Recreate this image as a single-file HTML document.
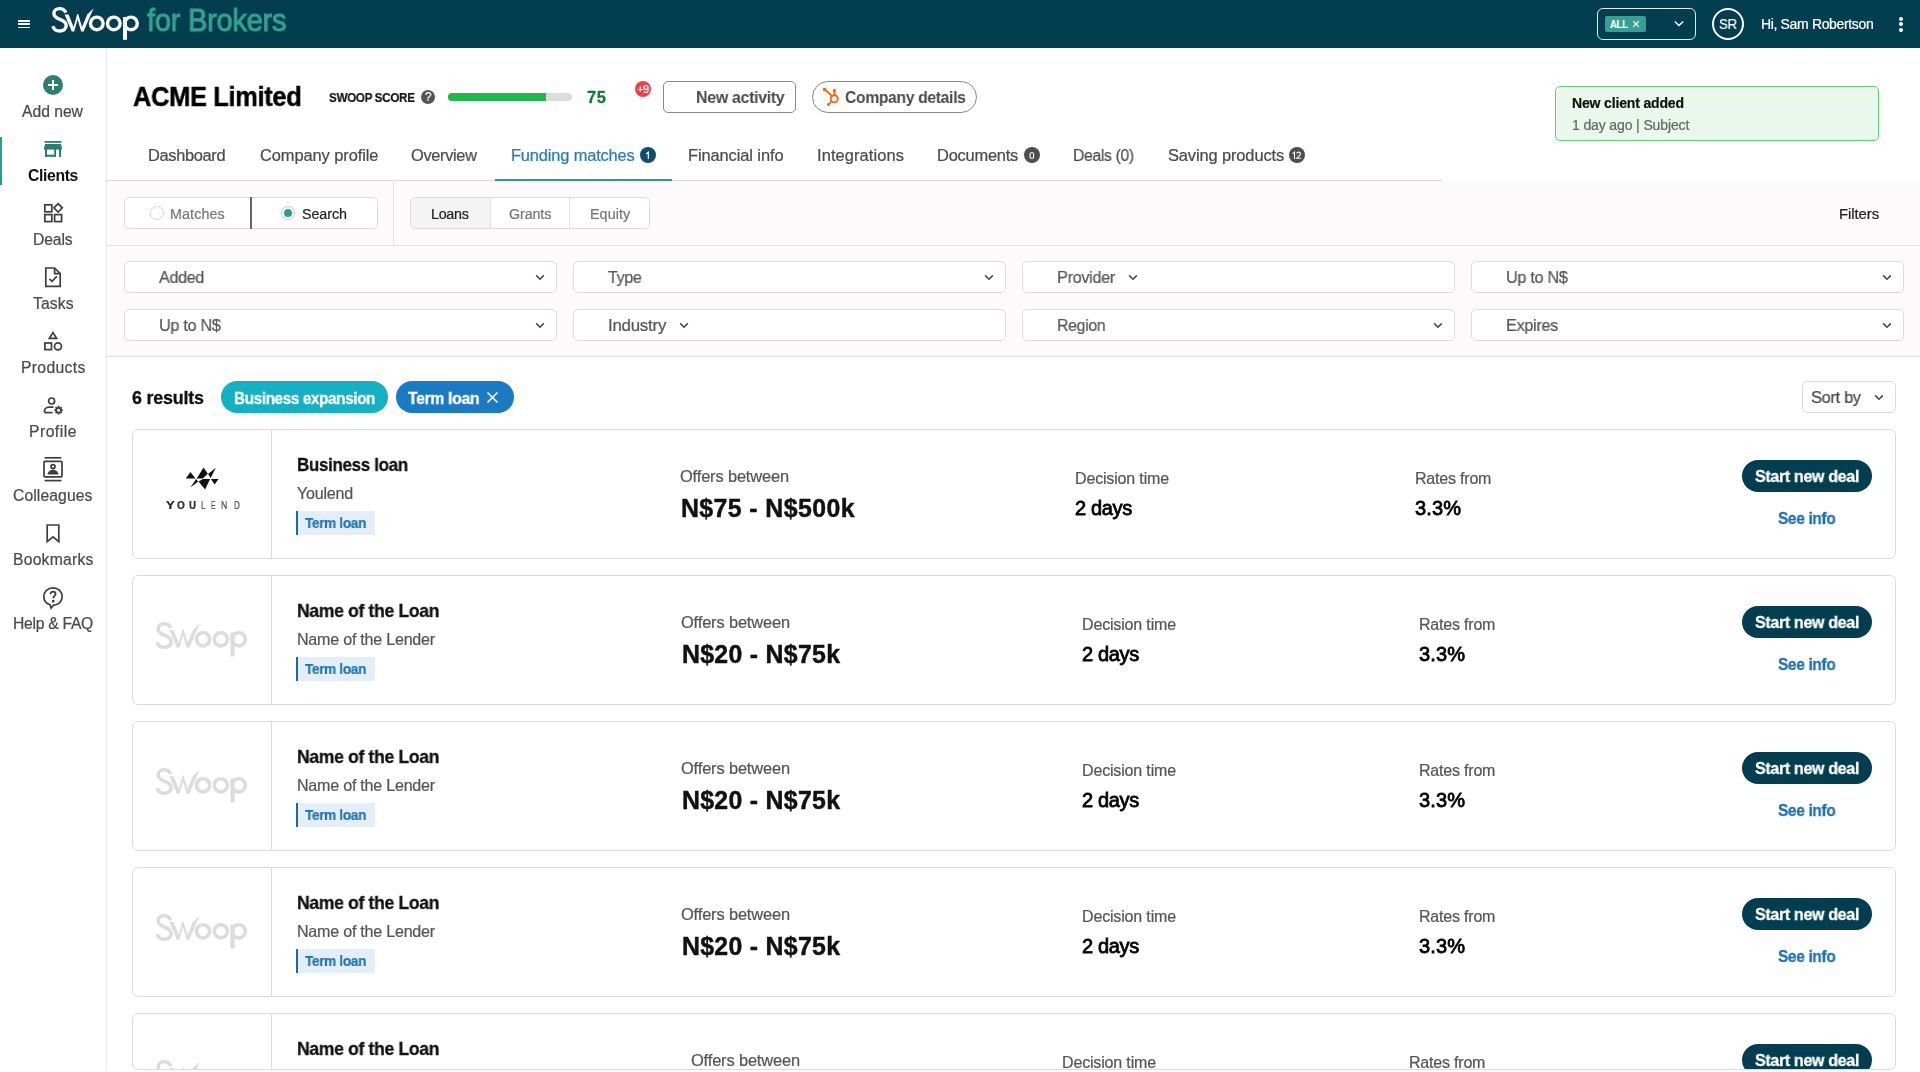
<!DOCTYPE html>
<html><head><meta charset="utf-8"><title>Swoop for Brokers</title>
<style>
html,body{margin:0;padding:0;width:1920px;height:1072px;overflow:hidden;background:#fff;position:relative}
body{font-family:"Liberation Sans",sans-serif}
.b{position:absolute}
.t{position:absolute;line-height:0;white-space:nowrap;will-change:transform}
svg.b{overflow:visible}
</style></head><body>
<div class="b" style="left:0px;top:0px;width:1920px;height:48px;background:#033e50"></div>
<div class="b" style="left:18px;top:20px;width:12px;height:1.6px;background:#fff"></div>
<div class="b" style="left:18px;top:23.3px;width:12px;height:1.6px;background:#fff"></div>
<div class="b" style="left:18px;top:26.7px;width:12px;height:1.6px;background:#fff"></div>
<svg class="b" style="left:48px;top:4px" width="96" height="40" viewBox="48 4 96 40">
<g fill="none" stroke="#fff" stroke-width="3.4">
<path d="M65.8 12.6 C64.6 9.8 62.3 8.6 59.6 8.6 C56 8.6 53.9 10.8 53.9 13.6 C53.9 16.9 56.8 18.3 59.9 19.4 C63.6 20.7 66.2 22.3 66.2 25.6 C66.2 29 63.4 31 59.6 31 C56.2 31 53.8 29.2 52.8 26.2"/>
<circle cx="96.8" cy="23.4" r="6.3"/>
<circle cx="113.8" cy="23.4" r="6.3"/>
<circle cx="131" cy="23.4" r="6.3"/>
</g>
<path d="M123 17 h4 v22.8 h-4z" fill="#fff"/>
<path d="M64.6 14.4 L68.6 14.4 L73.6 27 L77.2 14 L78.2 14 L82 27 L87.2 14.4 L93.8 8.2 L90.4 15.6 L83.6 31.6 L81.2 31.6 L77.6 19.6 L74.2 31.6 L71.8 31.6 Z" fill="#fff"/>
</svg>
<span class="t" style="left:146.50px;top:20.06px;font-size:31.71px;font-weight:400;color:#35a190;letter-spacing:-0.350px;transform:scaleX(0.9203);transform-origin:0 0;-webkit-text-stroke:0.22px #35a190;-webkit-text-stroke:0.9px #35a190;">for Brokers</span>
<div class="b" style="left:1597px;top:8px;width:99px;height:32px;border:1px solid #e6eef0;border-radius:6px;box-sizing:border-box"></div>
<div class="b" style="left:1605px;top:16px;width:41px;height:16px;background:#35a190;border-radius:2px"></div>
<span class="t" style="left:1609.70px;top:24.35px;font-size:10.57px;font-weight:700;color:#fff;letter-spacing:-0.350px;transform:scaleX(0.9068);transform-origin:0 0;-webkit-text-stroke:0.20px #fff;">ALL</span>
<svg class="b" style="left:1632px;top:20px" width="8" height="8" viewBox="0 0 8 8"><path d="M1 1L7 7M7 1L1 7" stroke="#fff" stroke-width="1.1"/></svg>
<svg class="b" style="left:1674px;top:20px" width="10" height="8" viewBox="0 0 10 8"><path d="M0.8 1.4L5 5.6L9.2 1.4" fill="none" stroke="#fff" stroke-width="1.4"/></svg>
<div class="b" style="left:1712px;top:8px;width:32px;height:32px;border:2px solid #fff;border-radius:50%;box-sizing:border-box"></div>
<span class="t" style="left:1719.00px;top:24.07px;font-size:14.29px;font-weight:400;color:#fff;letter-spacing:-0.350px;transform:scaleX(0.9234);transform-origin:0 0;-webkit-text-stroke:0.22px #fff;">SR</span>
<span class="t" style="left:1760.60px;top:24.37px;font-size:14.00px;font-weight:400;color:#fff;letter-spacing:-0.350px;transform:scaleX(0.9976);transform-origin:0 0;-webkit-text-stroke:0.22px #fff;">Hi, Sam Robertson</span>
<div class="b" style="left:1899px;top:16.6px;width:4px;height:4px;border-radius:50%;background:#fff"></div>
<div class="b" style="left:1899px;top:22.2px;width:4px;height:4px;border-radius:50%;background:#fff"></div>
<div class="b" style="left:1899px;top:27.8px;width:4px;height:4px;border-radius:50%;background:#fff"></div>
<div class="b" style="left:106px;top:48px;width:1px;height:1022px;background:#e8e8e8"></div>
<div class="b" style="left:0px;top:137px;width:2px;height:48px;background:#2a9d8f"></div>
<div class="b" style="left:43px;top:75px;width:20px;height:20px;border-radius:50%;background:#2b7e70"></div>
<div class="b" style="left:48px;top:84px;width:10px;height:2.2px;background:#fff"></div><div class="b" style="left:51.9px;top:80px;width:2.2px;height:10px;background:#fff"></div>
<svg class="b" style="left:43px;top:140px" width="20" height="18" viewBox="0 0 20 18">
<rect x="1.5" y="1" width="17" height="1.8" fill="#2b7e70"/>
<path d="M2 4 H18 L19 8.4 H1 Z" fill="#2b7e70"/>
<path d="M1 8 H19 V9.6 H1Z" fill="#2b7e70"/>
<rect x="2" y="9" width="2" height="8" fill="#2b7e70"/><rect x="16" y="9" width="2" height="8" fill="#2b7e70"/>
<rect x="2" y="14.7" width="11" height="2.1" fill="#2b7e70"/><rect x="11.2" y="9" width="1.9" height="7.8" fill="#2b7e70"/>
</svg>
<span class="t" style="left:22.00px;top:112.08px;font-size:15.71px;font-weight:400;color:#4a4a4a;letter-spacing:-0.032px;-webkit-text-stroke:0.22px #4a4a4a;">Add new</span>
<span class="t" style="left:27.70px;top:175.58px;font-size:15.71px;font-weight:700;color:#111;letter-spacing:-0.349px;-webkit-text-stroke:0.30px #111;-webkit-text-stroke:0;">Clients</span>
<span class="t" style="left:33.20px;top:239.88px;font-size:15.71px;font-weight:400;color:#4a4a4a;letter-spacing:-0.120px;-webkit-text-stroke:0.22px #4a4a4a;">Deals</span>
<span class="t" style="left:32.60px;top:303.78px;font-size:15.71px;font-weight:400;color:#4a4a4a;letter-spacing:0.134px;-webkit-text-stroke:0.22px #4a4a4a;">Tasks</span>
<span class="t" style="left:20.80px;top:367.88px;font-size:15.71px;font-weight:400;color:#4a4a4a;letter-spacing:0.327px;-webkit-text-stroke:0.22px #4a4a4a;">Products</span>
<span class="t" style="left:29.00px;top:431.88px;font-size:15.71px;font-weight:400;color:#4a4a4a;letter-spacing:0.475px;-webkit-text-stroke:0.22px #4a4a4a;">Profile</span>
<span class="t" style="left:13.30px;top:495.68px;font-size:15.71px;font-weight:400;color:#4a4a4a;letter-spacing:0.098px;-webkit-text-stroke:0.22px #4a4a4a;">Colleagues</span>
<span class="t" style="left:12.80px;top:559.68px;font-size:15.71px;font-weight:400;color:#4a4a4a;letter-spacing:0.225px;-webkit-text-stroke:0.22px #4a4a4a;">Bookmarks</span>
<span class="t" style="left:12.80px;top:623.88px;font-size:15.71px;font-weight:400;color:#4a4a4a;letter-spacing:-0.286px;-webkit-text-stroke:0.22px #4a4a4a;">Help &amp; FAQ</span>
<svg class="b" style="left:40px;top:200px" width="26" height="26" viewBox="0 0 26 26" fill="none" stroke="#3d3d3d" stroke-width="1.7">
<rect x="4.8" y="4.8" width="7" height="7"/><path d="M18.1 3.6 L22.3 7.8 L18.1 12 L13.9 7.8Z"/>
<rect x="4.8" y="14.6" width="7" height="7"/><rect x="14.6" y="14.6" width="7" height="7"/></svg>
<svg class="b" style="left:40px;top:264px" width="26" height="26" viewBox="0 0 26 26" fill="none" stroke="#3d3d3d" stroke-width="1.7">
<path d="M5.8 4 H14.6 L20.2 9.6 V22.4 H5.8Z"/><path d="M14.6 4 V9.6 H20.2" /><path d="M9.4 14.8 L12 17.4 L16.8 12.4"/></svg>
<svg class="b" style="left:40px;top:328px" width="26" height="26" viewBox="0 0 26 26" fill="none" stroke="#3d3d3d" stroke-width="1.7">
<path d="M13 4.6 L16.6 10.4 H9.4Z"/><rect x="4.9" y="15" width="6.6" height="6.6"/><circle cx="18" cy="18.3" r="3.5"/></svg>
<svg class="b" style="left:40px;top:392px" width="26" height="26" viewBox="0 0 26 26" fill="none" stroke="#3d3d3d" stroke-width="1.7">
<circle cx="11.6" cy="9" r="3"/><path d="M4.5 20.6 V19 C4.5 16.6 7 15 10.5 15 L13.5 15.2"/><path d="M4.5 20.6 H12.6"/>
<circle cx="18.6" cy="18.2" r="2.4"/><path d="M18.6 13.8v1.6M18.6 21v1.6M14.4 18.2h1.6M21.2 18.2h1.6M15.6 15.2l1.1 1.1M20.5 20.1l1.1 1.1M15.6 21.2l1.1-1.1M20.5 16.3l1.1-1.1"/></svg>
<svg class="b" style="left:40px;top:456px" width="26" height="26" viewBox="0 0 26 26" fill="none" stroke="#3d3d3d" stroke-width="1.7">
<path d="M4.6 1.8 H21.4"/><path d="M4.6 24.6 H21.4"/><rect x="4" y="5.4" width="18" height="15.4" rx="1"/>
<circle cx="13" cy="10.6" r="2"/><path d="M8.6 17.6 C9.4 15.4 11 14.6 13 14.6 C15 14.6 16.6 15.4 17.4 17.6Z" fill="#3d3d3d"/></svg>
<svg class="b" style="left:40px;top:520px" width="26" height="26" viewBox="0 0 26 26" fill="none" stroke="#3d3d3d" stroke-width="1.7">
<path d="M7.2 5 H18.8 V21.6 L13 16.8 L7.2 21.6Z"/></svg>
<svg class="b" style="left:40px;top:584px" width="26" height="26" viewBox="0 0 26 26" fill="none" stroke="#3d3d3d" stroke-width="1.7">
<path d="M13.6 21.2 C18.6 21 22.2 17.4 22.2 12.6 C22.2 7.6 18.2 3.8 13 3.8 C7.9 3.8 3.8 7.7 3.8 12.6 C3.8 16.6 6.3 19.7 10 20.8 L11 24 Z"/>
<path d="M10.4 10.2 C10.4 8.6 11.6 7.6 13 7.6 C14.5 7.6 15.6 8.6 15.6 10 C15.6 11.8 13.2 12 13.2 14.2"/><circle cx="13.2" cy="17.2" r="0.6" fill="#3d3d3d"/></svg>
<span class="t" style="left:133.00px;top:97.44px;font-size:27.43px;font-weight:700;color:#000;letter-spacing:-0.350px;transform:scaleX(0.9272);transform-origin:0 0;-webkit-text-stroke:0.45px #000;">ACME Limited</span>
<span class="t" style="left:328.70px;top:97.67px;font-size:13.14px;font-weight:700;color:#111;letter-spacing:-0.350px;transform:scaleX(0.8863);transform-origin:0 0;-webkit-text-stroke:0.20px #111;">SWOOP SCORE</span>
<div class="b" style="left:421px;top:90px;width:14px;height:14px;border-radius:50%;background:#555"></div>
<span class="t" style="left:424.80px;top:97.06px;font-size:12.29px;font-weight:400;color:#fff;letter-spacing:0.000px;transform:scaleX(0.9369);transform-origin:0 0;-webkit-text-stroke:0.22px #fff;">?</span>
<div class="b" style="left:448px;top:93px;width:124px;height:8px;background:#dddddd;border-radius:4px"></div>
<div class="b" style="left:448px;top:93px;width:98px;height:8px;background:#1fb84a;border-radius:4px 0 0 4px"></div>
<span class="t" style="left:587.20px;top:97.33px;font-size:16.43px;font-weight:700;color:#0f7a30;letter-spacing:0.531px;-webkit-text-stroke:0.30px #0f7a30;">75</span>
<div class="b" style="left:635px;top:81px;width:16px;height:16px;border-radius:50%;background:#e8434b"></div>
<span class="t" style="left:637.20px;top:89.26px;font-size:11.43px;font-weight:400;color:#fff;letter-spacing:-0.350px;transform:scaleX(0.9623);transform-origin:0 0;-webkit-text-stroke:0.22px #fff;">+9</span>
<div class="b" style="left:663px;top:81px;width:133px;height:32px;border:1px solid #8a8a8a;border-radius:5px;box-sizing:border-box"></div>
<span class="t" style="left:696.00px;top:97.29px;font-size:17.14px;font-weight:700;color:#4a4a4a;letter-spacing:-0.350px;transform:scaleX(0.9324);transform-origin:0 0;-webkit-text-stroke:0.30px #4a4a4a;-webkit-text-stroke:0;">New activity</span>
<div class="b" style="left:812px;top:81px;width:165px;height:32px;border:1px solid #8a8a8a;border-radius:16px;box-sizing:border-box"></div>
<svg class="b" style="left:821px;top:86px" width="20" height="22" viewBox="0 0 20 22">
<g stroke="#f4680f" stroke-width="1.9" fill="none"><circle cx="13.3" cy="12.8" r="3.55"/><path d="M3.7 3.6 L10.6 9.4"/><path d="M13.3 4.4 V9.3"/><path d="M7.4 18.4 L10.9 15.1"/></g>
<circle cx="3.65" cy="3.55" r="1.9" fill="#f4680f"/><circle cx="13.3" cy="4.4" r="1.6" fill="#f4680f"/><circle cx="7.4" cy="18.4" r="1.5" fill="#f4680f"/></svg>
<span class="t" style="left:845.00px;top:97.29px;font-size:17.14px;font-weight:700;color:#4a4a4a;letter-spacing:-0.350px;transform:scaleX(0.9147);transform-origin:0 0;-webkit-text-stroke:0.30px #4a4a4a;-webkit-text-stroke:0;">Company details</span>
<div class="b" style="left:1555px;top:86px;width:324px;height:55px;background:#e9f7ec;border:1.5px solid #5fcf77;border-radius:5px;box-sizing:border-box"></div>
<span class="t" style="left:1571.70px;top:103.47px;font-size:14.00px;font-weight:700;color:#111;letter-spacing:-0.157px;-webkit-text-stroke:0.20px #111;">New client added</span>
<span class="t" style="left:1571.70px;top:124.77px;font-size:14.00px;font-weight:400;color:#666;letter-spacing:-0.128px;-webkit-text-stroke:0.22px #666;">1 day ago | Subject</span>
<span class="t" style="left:148.30px;top:155.33px;font-size:16.43px;font-weight:400;color:#4a4a4a;letter-spacing:-0.350px;-webkit-text-stroke:0.22px #4a4a4a;">Dashboard</span>
<span class="t" style="left:259.50px;top:155.33px;font-size:16.43px;font-weight:400;color:#4a4a4a;letter-spacing:-0.080px;-webkit-text-stroke:0.22px #4a4a4a;">Company profile</span>
<span class="t" style="left:411.40px;top:155.33px;font-size:16.43px;font-weight:400;color:#4a4a4a;letter-spacing:-0.350px;transform:scaleX(0.9976);transform-origin:0 0;-webkit-text-stroke:0.22px #4a4a4a;">Overview</span>
<span class="t" style="left:511.30px;top:155.33px;font-size:16.43px;font-weight:400;color:#2a7ab8;letter-spacing:-0.159px;-webkit-text-stroke:0.22px #2a7ab8;">Funding matches</span>
<div class="b" style="left:640px;top:147px;width:16px;height:16px;border-radius:50%;background:#0c4f66"></div>
<svg class="b" style="left:0;top:0" width="1" height="1" viewBox="0 0 1 1"><path d="M646.2 154 L648.3 152.3 V159" fill="none" stroke="#fff" stroke-width="1.15"/></svg>
<span class="t" style="left:688.20px;top:155.33px;font-size:16.43px;font-weight:400;color:#4a4a4a;letter-spacing:-0.092px;-webkit-text-stroke:0.22px #4a4a4a;">Financial info</span>
<span class="t" style="left:817.40px;top:155.33px;font-size:16.43px;font-weight:400;color:#4a4a4a;letter-spacing:0.095px;-webkit-text-stroke:0.22px #4a4a4a;">Integrations</span>
<span class="t" style="left:937.40px;top:155.33px;font-size:16.43px;font-weight:400;color:#4a4a4a;letter-spacing:-0.224px;-webkit-text-stroke:0.22px #4a4a4a;">Documents</span>
<div class="b" style="left:1024px;top:147px;width:16px;height:16px;border-radius:50%;background:#4d4d4d"></div>
<svg class="b" style="left:0;top:0" width="1" height="1" viewBox="0 0 1 1"><rect x="1030.1" y="152.8" width="3.5" height="5.5" rx="1.1" fill="none" stroke="#fff" stroke-width="1.1"/></svg>
<span class="t" style="left:1072.50px;top:155.33px;font-size:16.43px;font-weight:400;color:#4a4a4a;letter-spacing:-0.350px;transform:scaleX(0.9585);transform-origin:0 0;-webkit-text-stroke:0.22px #4a4a4a;">Deals (0)</span>
<span class="t" style="left:1167.50px;top:155.33px;font-size:16.43px;font-weight:400;color:#4a4a4a;letter-spacing:-0.115px;-webkit-text-stroke:0.22px #4a4a4a;">Saving products</span>
<div class="b" style="left:1289px;top:147px;width:16px;height:16px;border-radius:50%;background:#4d4d4d"></div>
<svg class="b" style="left:0;top:0" width="1" height="1" viewBox="0 0 1 1"><g fill="none" stroke="#fff" stroke-width="1.1"><path d="M1292.6 153.6 L1294.5 152.2 V159"/><path d="M1296.7 153.6 C1296.9 152.6 1297.7 152.1 1298.6 152.1 C1299.7 152.1 1300.5 152.8 1300.5 153.8 C1300.5 154.7 1299.9 155.3 1299.2 155.9 L1296.7 158.3 H1301.1"/></g></svg>
<div class="b" style="left:107px;top:180px;width:1335px;height:1px;background:#dcdcdc"></div>
<div class="b" style="left:495px;top:179px;width:177px;height:2px;background:#2a9d8f"></div>
<div class="b" style="left:107px;top:181px;width:1813px;height:175px;background:#fcfafa"></div>
<div class="b" style="left:107px;top:356px;width:1813px;height:1px;background:#dedede"></div>
<div class="b" style="left:107px;top:245px;width:1813px;height:1px;background:#e2e2e2"></div>
<div class="b" style="left:393px;top:181px;width:1px;height:64px;background:#e2e2e2"></div>
<div class="b" style="left:124px;top:197px;width:254px;height:32px;background:#fff;border:1px solid #dcdcdc;border-radius:5px;box-sizing:border-box"></div>
<div class="b" style="left:250px;top:197px;width:2px;height:32px;background:#666"></div>
<div class="b" style="left:150px;top:206px;width:14px;height:14px;border-radius:50%;border:1px solid #d6d6d6;box-sizing:border-box;background:#fff"></div>
<span class="t" style="left:170.40px;top:213.57px;font-size:14.29px;font-weight:400;color:#777;letter-spacing:0.119px;-webkit-text-stroke:0.22px #777;">Matches</span>
<div class="b" style="left:281px;top:206px;width:14px;height:14px;border-radius:50%;border:1px solid #c8c8c8;box-sizing:border-box;background:#fff"></div>
<div class="b" style="left:284px;top:209px;width:8px;height:8px;border-radius:50%;background:#2a9d8f"></div>
<span class="t" style="left:301.50px;top:213.57px;font-size:14.29px;font-weight:400;color:#222;letter-spacing:-0.071px;-webkit-text-stroke:0.22px #222;">Search</span>
<div class="b" style="left:410px;top:197px;width:240px;height:32px;background:#fff;border:1px solid #dcdcdc;border-radius:5px;box-sizing:border-box;overflow:hidden"></div>
<div class="b" style="left:411px;top:198px;width:79px;height:30px;background:#f4f4f4;border-radius:4px 0 0 4px"></div>
<div class="b" style="left:490px;top:198px;width:1px;height:30px;background:#e2e2e2"></div>
<div class="b" style="left:569px;top:198px;width:1px;height:30px;background:#e2e2e2"></div>
<span class="t" style="left:431.40px;top:213.67px;font-size:14.29px;font-weight:400;color:#222;letter-spacing:-0.257px;-webkit-text-stroke:0.22px #222;">Loans</span>
<span class="t" style="left:508.60px;top:213.67px;font-size:14.29px;font-weight:400;color:#777;letter-spacing:-0.094px;-webkit-text-stroke:0.22px #777;">Grants</span>
<span class="t" style="left:589.60px;top:213.67px;font-size:14.29px;font-weight:400;color:#777;letter-spacing:0.080px;-webkit-text-stroke:0.22px #777;">Equity</span>
<span class="t" style="left:1839.30px;top:213.77px;font-size:14.86px;font-weight:400;color:#222;letter-spacing:-0.057px;-webkit-text-stroke:0.22px #222;">Filters</span>
<div class="b" style="left:124px;top:261px;width:433px;height:32px;background:#fff;border:1px solid #dcdcdc;border-radius:5px;box-sizing:border-box"></div>
<span class="t" style="left:158.50px;top:277.98px;font-size:16.86px;font-weight:400;color:#555;letter-spacing:-0.350px;transform:scaleX(0.9556);transform-origin:0 0;-webkit-text-stroke:0.22px #555;">Added</span>
<svg class="b" style="left:534.5px;top:273.5px" width="10" height="7" viewBox="0 0 10 7"><path d="M1.2 1.4L5 5.2L8.8 1.4" fill="none" stroke="#444" stroke-width="1.5"/></svg>
<div class="b" style="left:573px;top:261px;width:433px;height:32px;background:#fff;border:1px solid #dcdcdc;border-radius:5px;box-sizing:border-box"></div>
<span class="t" style="left:607.50px;top:277.98px;font-size:16.86px;font-weight:400;color:#555;letter-spacing:-0.350px;transform:scaleX(0.9550);transform-origin:0 0;-webkit-text-stroke:0.22px #555;">Type</span>
<svg class="b" style="left:983.5px;top:273.5px" width="10" height="7" viewBox="0 0 10 7"><path d="M1.2 1.4L5 5.2L8.8 1.4" fill="none" stroke="#444" stroke-width="1.5"/></svg>
<div class="b" style="left:1022px;top:261px;width:433px;height:32px;background:#fff;border:1px solid #dcdcdc;border-radius:5px;box-sizing:border-box"></div>
<span class="t" style="left:1056.50px;top:277.98px;font-size:16.86px;font-weight:400;color:#555;letter-spacing:-0.350px;transform:scaleX(0.9648);transform-origin:0 0;-webkit-text-stroke:0.22px #555;">Provider</span>
<svg class="b" style="left:1127.7px;top:273.5px" width="10" height="7" viewBox="0 0 10 7"><path d="M1.2 1.4L5 5.2L8.8 1.4" fill="none" stroke="#444" stroke-width="1.5"/></svg>
<div class="b" style="left:1471px;top:261px;width:433px;height:32px;background:#fff;border:1px solid #dcdcdc;border-radius:5px;box-sizing:border-box"></div>
<span class="t" style="left:1505.50px;top:277.98px;font-size:16.86px;font-weight:400;color:#555;letter-spacing:-0.350px;transform:scaleX(0.9646);transform-origin:0 0;-webkit-text-stroke:0.22px #555;">Up to N$</span>
<svg class="b" style="left:1881.5px;top:273.5px" width="10" height="7" viewBox="0 0 10 7"><path d="M1.2 1.4L5 5.2L8.8 1.4" fill="none" stroke="#444" stroke-width="1.5"/></svg>
<div class="b" style="left:124px;top:309px;width:433px;height:32px;background:#fff;border:1px solid #dcdcdc;border-radius:5px;box-sizing:border-box"></div>
<span class="t" style="left:158.50px;top:325.98px;font-size:16.86px;font-weight:400;color:#555;letter-spacing:-0.350px;transform:scaleX(0.9646);transform-origin:0 0;-webkit-text-stroke:0.22px #555;">Up to N$</span>
<svg class="b" style="left:534.5px;top:321.5px" width="10" height="7" viewBox="0 0 10 7"><path d="M1.2 1.4L5 5.2L8.8 1.4" fill="none" stroke="#444" stroke-width="1.5"/></svg>
<div class="b" style="left:573px;top:309px;width:433px;height:32px;background:#fff;border:1px solid #dcdcdc;border-radius:5px;box-sizing:border-box"></div>
<span class="t" style="left:607.50px;top:325.98px;font-size:16.86px;font-weight:400;color:#555;letter-spacing:-0.237px;-webkit-text-stroke:0.22px #555;">Industry</span>
<svg class="b" style="left:679px;top:321.5px" width="10" height="7" viewBox="0 0 10 7"><path d="M1.2 1.4L5 5.2L8.8 1.4" fill="none" stroke="#444" stroke-width="1.5"/></svg>
<div class="b" style="left:1022px;top:309px;width:433px;height:32px;background:#fff;border:1px solid #dcdcdc;border-radius:5px;box-sizing:border-box"></div>
<span class="t" style="left:1056.50px;top:325.98px;font-size:16.86px;font-weight:400;color:#555;letter-spacing:-0.350px;transform:scaleX(0.9425);transform-origin:0 0;-webkit-text-stroke:0.22px #555;">Region</span>
<svg class="b" style="left:1432.5px;top:321.5px" width="10" height="7" viewBox="0 0 10 7"><path d="M1.2 1.4L5 5.2L8.8 1.4" fill="none" stroke="#444" stroke-width="1.5"/></svg>
<div class="b" style="left:1471px;top:309px;width:433px;height:32px;background:#fff;border:1px solid #dcdcdc;border-radius:5px;box-sizing:border-box"></div>
<span class="t" style="left:1505.50px;top:325.98px;font-size:16.86px;font-weight:400;color:#555;letter-spacing:-0.350px;transform:scaleX(0.9645);transform-origin:0 0;-webkit-text-stroke:0.22px #555;">Expires</span>
<svg class="b" style="left:1881.5px;top:321.5px" width="10" height="7" viewBox="0 0 10 7"><path d="M1.2 1.4L5 5.2L8.8 1.4" fill="none" stroke="#444" stroke-width="1.5"/></svg>
<span class="t" style="left:132.40px;top:397.54px;font-size:17.86px;font-weight:700;color:#111;letter-spacing:-0.193px;-webkit-text-stroke:0.30px #111;">6 results</span>
<div class="b" style="left:221px;top:381px;width:167px;height:32px;background:#16b0c5;border-radius:16px"></div>
<span class="t" style="left:233.80px;top:397.83px;font-size:16.43px;font-weight:700;color:#fff;letter-spacing:-0.350px;transform:scaleX(0.9247);transform-origin:0 0;-webkit-text-stroke:0.30px #fff;">Business expansion</span>
<div class="b" style="left:396px;top:381px;width:118px;height:32px;background:#1a7bc3;border-radius:16px"></div>
<span class="t" style="left:408.30px;top:397.83px;font-size:16.43px;font-weight:700;color:#fff;letter-spacing:-0.350px;transform:scaleX(0.9598);transform-origin:0 0;-webkit-text-stroke:0.30px #fff;">Term loan</span>
<svg class="b" style="left:486px;top:391px" width="13" height="13" viewBox="0 0 13 13"><path d="M1.5 1.5L11.5 11.5M11.5 1.5L1.5 11.5" stroke="#fff" stroke-width="1.6"/></svg>
<div class="b" style="left:1802px;top:381px;width:94px;height:32px;background:#fff;border:1px solid #dcdcdc;border-radius:5px;box-sizing:border-box"></div>
<span class="t" style="left:1810.60px;top:397.29px;font-size:17.14px;font-weight:400;color:#4a4a4a;letter-spacing:-0.350px;transform:scaleX(0.9615);transform-origin:0 0;-webkit-text-stroke:0.22px #4a4a4a;">Sort by</span>
<svg class="b" style="left:1874px;top:393.5px" width="10" height="7" viewBox="0 0 10 7"><path d="M1.2 1.4L5 5.2L8.8 1.4" fill="none" stroke="#444" stroke-width="1.5"/></svg>
<div class="b" style="left:132px;top:429px;width:1764px;height:130px;border:1px solid #dcdcdc;border-radius:6px;box-sizing:border-box;overflow:hidden;background:#fff">
</div>
<div class="b" style="left:133px;top:430px;width:1762px;height:128px;overflow:hidden"><div class="b" style="left:-133px;top:-430px;width:1920px;height:1072px">
<div class="b" style="left:271px;top:429px;width:1px;height:130px;background:#dcdcdc"></div>
<svg class="b" style="left:0px;top:0px" width="1" height="1" viewBox="0 0 1 1"><g fill="#111">
<path d="M185.8 478.4 L190.4 472 L195.5 478.4Z"/>
<path d="M196.7 478.4 L203.6 467.4 L207.8 473.8 L202.7 478.4Z"/>
<path d="M208.1 473.9 L215.8 467.7 L210.7 478.1Z"/>
<path d="M196.1 479 L198.2 481.4 L190.4 487.4Z"/>
<path d="M198.5 481.4 L203 479 L210.1 479 L205.1 489.5Z"/>
<path d="M211 479 L218.5 479 L214.6 484.4Z"/></g></svg>
<span class="t" style="left:166.00px;top:505.06px;font-size:11.43px;font-weight:700;color:#222;letter-spacing:0.000px;transform:scaleX(1.1413);transform-origin:0 0;-webkit-text-stroke:0.20px #222;">Y</span>
<span class="t" style="left:176.60px;top:505.06px;font-size:11.43px;font-weight:700;color:#222;letter-spacing:0.000px;transform:scaleX(0.8772);transform-origin:0 0;-webkit-text-stroke:0.20px #222;">O</span>
<span class="t" style="left:189.00px;top:505.06px;font-size:11.43px;font-weight:700;color:#222;letter-spacing:0.000px;transform:scaleX(0.8483);transform-origin:0 0;-webkit-text-stroke:0.20px #222;">U</span>
<span class="t" style="left:201.00px;top:505.06px;font-size:11.43px;font-weight:400;color:#444;letter-spacing:0.000px;transform:scaleX(0.7082);transform-origin:0 0;-webkit-text-stroke:0.22px #444;">L</span>
<span class="t" style="left:211.00px;top:505.06px;font-size:11.43px;font-weight:400;color:#444;letter-spacing:0.000px;transform:scaleX(0.6034);transform-origin:0 0;-webkit-text-stroke:0.22px #444;">E</span>
<span class="t" style="left:221.00px;top:505.06px;font-size:11.43px;font-weight:400;color:#444;letter-spacing:0.000px;transform:scaleX(0.7635);transform-origin:0 0;-webkit-text-stroke:0.22px #444;">N</span>
<span class="t" style="left:233.60px;top:505.06px;font-size:11.43px;font-weight:400;color:#444;letter-spacing:0.000px;transform:scaleX(0.7029);transform-origin:0 0;-webkit-text-stroke:0.22px #444;">D</span>
<span class="t" style="left:296.80px;top:464.69px;font-size:18.57px;font-weight:700;color:#111;letter-spacing:-0.350px;transform:scaleX(0.9144);transform-origin:0 0;-webkit-text-stroke:0.30px #111;">Business loan</span>
<span class="t" style="left:296.80px;top:493.36px;font-size:16.07px;font-weight:400;color:#555;letter-spacing:-0.217px;-webkit-text-stroke:0.22px #555;">Youlend</span>
<div class="b" style="left:296px;top:511px;width:79px;height:24px;background:#e3eef9"></div>
<div class="b" style="left:296px;top:511px;width:2px;height:24px;background:#1a6aa8"></div>
<span class="t" style="left:305.00px;top:523.17px;font-size:14.29px;font-weight:700;color:#1f75b3;letter-spacing:-0.350px;transform:scaleX(0.9532);transform-origin:0 0;-webkit-text-stroke:0.20px #1f75b3;">Term loan</span>
<span class="t" style="left:679.90px;top:476.23px;font-size:16.43px;font-weight:400;color:#555;letter-spacing:-0.154px;-webkit-text-stroke:0.22px #555;">Offers between</span>
<span class="t" style="left:680.90px;top:508.42px;font-size:24.86px;font-weight:700;color:#111;letter-spacing:0.406px;-webkit-text-stroke:0.45px #111;">N$75 - N$500k</span>
<span class="t" style="left:1074.90px;top:478.68px;font-size:16.00px;font-weight:400;color:#555;letter-spacing:-0.161px;-webkit-text-stroke:0.22px #555;">Decision time</span>
<span class="t" style="left:1074.90px;top:507.50px;font-size:20.00px;font-weight:400;color:#000;letter-spacing:-0.350px;transform:scaleX(0.9970);transform-origin:0 0;-webkit-text-stroke:0.22px #000;-webkit-text-stroke:0.8px #000;">2 days</span>
<span class="t" style="left:1415.30px;top:478.68px;font-size:16.00px;font-weight:400;color:#555;letter-spacing:-0.204px;-webkit-text-stroke:0.22px #555;">Rates from</span>
<span class="t" style="left:1415.30px;top:507.50px;font-size:20.00px;font-weight:400;color:#000;letter-spacing:0.140px;-webkit-text-stroke:0.22px #000;-webkit-text-stroke:0.8px #000;">3.3%</span>
<div class="b" style="left:1742px;top:460px;width:130px;height:32px;background:#033e50;border-radius:16px"></div>
<span class="t" style="left:1754.80px;top:476.73px;font-size:16.71px;font-weight:700;color:#fff;letter-spacing:-0.350px;transform:scaleX(0.9607);transform-origin:0 0;-webkit-text-stroke:0.30px #fff;">Start new deal</span>
<span class="t" style="left:1778.30px;top:518.23px;font-size:16.43px;font-weight:700;color:#1f70b0;letter-spacing:-0.350px;transform:scaleX(0.9389);transform-origin:0 0;-webkit-text-stroke:0.30px #1f70b0;">See info</span>
</div></div>
<div class="b" style="left:132px;top:575px;width:1764px;height:130px;border:1px solid #dcdcdc;border-radius:6px;box-sizing:border-box;overflow:hidden;background:#fff">
</div>
<div class="b" style="left:133px;top:576px;width:1762px;height:128px;overflow:hidden"><div class="b" style="left:-133px;top:-576px;width:1920px;height:1072px">
<div class="b" style="left:271px;top:575px;width:1px;height:130px;background:#dcdcdc"></div>
<svg class="b" style="left:151.816px;top:618.6320000000001px" width="100.416" height="41.84" viewBox="48 4 96 40">
<g fill="none" stroke="#dcdcdc" stroke-width="3.4">
<path d="M65.8 12.6 C64.6 9.8 62.3 8.6 59.6 8.6 C56 8.6 53.9 10.8 53.9 13.6 C53.9 16.9 56.8 18.3 59.9 19.4 C63.6 20.7 66.2 22.3 66.2 25.6 C66.2 29 63.4 31 59.6 31 C56.2 31 53.8 29.2 52.8 26.2"/>
<circle cx="96.8" cy="23.4" r="6.3"/>
<circle cx="113.8" cy="23.4" r="6.3"/>
<circle cx="131" cy="23.4" r="6.3"/>
</g>
<path d="M123 17 h4 v22.8 h-4z" fill="#dcdcdc"/>
<path d="M64.6 14.4 L68.6 14.4 L73.6 27 L77.2 14 L78.2 14 L82 27 L87.2 14.4 L93.8 8.2 L90.4 15.6 L83.6 31.6 L81.2 31.6 L77.6 19.6 L74.2 31.6 L71.8 31.6 Z" fill="#dcdcdc"/>
</svg>
<span class="t" style="left:296.80px;top:610.69px;font-size:18.57px;font-weight:700;color:#111;letter-spacing:-0.350px;transform:scaleX(0.9458);transform-origin:0 0;-webkit-text-stroke:0.30px #111;">Name of the Loan</span>
<span class="t" style="left:296.80px;top:639.36px;font-size:16.07px;font-weight:400;color:#555;letter-spacing:-0.227px;-webkit-text-stroke:0.22px #555;">Name of the Lender</span>
<div class="b" style="left:296px;top:657px;width:79px;height:24px;background:#e3eef9"></div>
<div class="b" style="left:296px;top:657px;width:2px;height:24px;background:#1a6aa8"></div>
<span class="t" style="left:305.00px;top:669.17px;font-size:14.29px;font-weight:700;color:#1f75b3;letter-spacing:-0.350px;transform:scaleX(0.9532);transform-origin:0 0;-webkit-text-stroke:0.20px #1f75b3;">Term loan</span>
<span class="t" style="left:681.00px;top:622.23px;font-size:16.43px;font-weight:400;color:#555;letter-spacing:-0.154px;-webkit-text-stroke:0.22px #555;">Offers between</span>
<span class="t" style="left:682.00px;top:654.42px;font-size:24.86px;font-weight:700;color:#111;letter-spacing:0.290px;-webkit-text-stroke:0.45px #111;">N$20 - N$75k</span>
<span class="t" style="left:1082.40px;top:624.68px;font-size:16.00px;font-weight:400;color:#555;letter-spacing:-0.161px;-webkit-text-stroke:0.22px #555;">Decision time</span>
<span class="t" style="left:1082.40px;top:653.50px;font-size:20.00px;font-weight:400;color:#000;letter-spacing:-0.350px;transform:scaleX(0.9970);transform-origin:0 0;-webkit-text-stroke:0.22px #000;-webkit-text-stroke:0.8px #000;">2 days</span>
<span class="t" style="left:1419.20px;top:624.68px;font-size:16.00px;font-weight:400;color:#555;letter-spacing:-0.204px;-webkit-text-stroke:0.22px #555;">Rates from</span>
<span class="t" style="left:1419.20px;top:653.50px;font-size:20.00px;font-weight:400;color:#000;letter-spacing:0.140px;-webkit-text-stroke:0.22px #000;-webkit-text-stroke:0.8px #000;">3.3%</span>
<div class="b" style="left:1742px;top:606px;width:130px;height:32px;background:#033e50;border-radius:16px"></div>
<span class="t" style="left:1754.80px;top:622.73px;font-size:16.71px;font-weight:700;color:#fff;letter-spacing:-0.350px;transform:scaleX(0.9607);transform-origin:0 0;-webkit-text-stroke:0.30px #fff;">Start new deal</span>
<span class="t" style="left:1778.30px;top:664.23px;font-size:16.43px;font-weight:700;color:#1f70b0;letter-spacing:-0.350px;transform:scaleX(0.9389);transform-origin:0 0;-webkit-text-stroke:0.30px #1f70b0;">See info</span>
</div></div>
<div class="b" style="left:132px;top:721px;width:1764px;height:130px;border:1px solid #dcdcdc;border-radius:6px;box-sizing:border-box;overflow:hidden;background:#fff">
</div>
<div class="b" style="left:133px;top:722px;width:1762px;height:128px;overflow:hidden"><div class="b" style="left:-133px;top:-722px;width:1920px;height:1072px">
<div class="b" style="left:271px;top:721px;width:1px;height:130px;background:#dcdcdc"></div>
<svg class="b" style="left:151.816px;top:764.6320000000001px" width="100.416" height="41.84" viewBox="48 4 96 40">
<g fill="none" stroke="#dcdcdc" stroke-width="3.4">
<path d="M65.8 12.6 C64.6 9.8 62.3 8.6 59.6 8.6 C56 8.6 53.9 10.8 53.9 13.6 C53.9 16.9 56.8 18.3 59.9 19.4 C63.6 20.7 66.2 22.3 66.2 25.6 C66.2 29 63.4 31 59.6 31 C56.2 31 53.8 29.2 52.8 26.2"/>
<circle cx="96.8" cy="23.4" r="6.3"/>
<circle cx="113.8" cy="23.4" r="6.3"/>
<circle cx="131" cy="23.4" r="6.3"/>
</g>
<path d="M123 17 h4 v22.8 h-4z" fill="#dcdcdc"/>
<path d="M64.6 14.4 L68.6 14.4 L73.6 27 L77.2 14 L78.2 14 L82 27 L87.2 14.4 L93.8 8.2 L90.4 15.6 L83.6 31.6 L81.2 31.6 L77.6 19.6 L74.2 31.6 L71.8 31.6 Z" fill="#dcdcdc"/>
</svg>
<span class="t" style="left:296.80px;top:756.69px;font-size:18.57px;font-weight:700;color:#111;letter-spacing:-0.350px;transform:scaleX(0.9458);transform-origin:0 0;-webkit-text-stroke:0.30px #111;">Name of the Loan</span>
<span class="t" style="left:296.80px;top:785.36px;font-size:16.07px;font-weight:400;color:#555;letter-spacing:-0.227px;-webkit-text-stroke:0.22px #555;">Name of the Lender</span>
<div class="b" style="left:296px;top:803px;width:79px;height:24px;background:#e3eef9"></div>
<div class="b" style="left:296px;top:803px;width:2px;height:24px;background:#1a6aa8"></div>
<span class="t" style="left:305.00px;top:815.17px;font-size:14.29px;font-weight:700;color:#1f75b3;letter-spacing:-0.350px;transform:scaleX(0.9532);transform-origin:0 0;-webkit-text-stroke:0.20px #1f75b3;">Term loan</span>
<span class="t" style="left:681.00px;top:768.23px;font-size:16.43px;font-weight:400;color:#555;letter-spacing:-0.154px;-webkit-text-stroke:0.22px #555;">Offers between</span>
<span class="t" style="left:682.00px;top:800.42px;font-size:24.86px;font-weight:700;color:#111;letter-spacing:0.290px;-webkit-text-stroke:0.45px #111;">N$20 - N$75k</span>
<span class="t" style="left:1082.40px;top:770.68px;font-size:16.00px;font-weight:400;color:#555;letter-spacing:-0.161px;-webkit-text-stroke:0.22px #555;">Decision time</span>
<span class="t" style="left:1082.40px;top:799.50px;font-size:20.00px;font-weight:400;color:#000;letter-spacing:-0.350px;transform:scaleX(0.9970);transform-origin:0 0;-webkit-text-stroke:0.22px #000;-webkit-text-stroke:0.8px #000;">2 days</span>
<span class="t" style="left:1419.20px;top:770.68px;font-size:16.00px;font-weight:400;color:#555;letter-spacing:-0.204px;-webkit-text-stroke:0.22px #555;">Rates from</span>
<span class="t" style="left:1419.20px;top:799.50px;font-size:20.00px;font-weight:400;color:#000;letter-spacing:0.140px;-webkit-text-stroke:0.22px #000;-webkit-text-stroke:0.8px #000;">3.3%</span>
<div class="b" style="left:1742px;top:752px;width:130px;height:32px;background:#033e50;border-radius:16px"></div>
<span class="t" style="left:1754.80px;top:768.73px;font-size:16.71px;font-weight:700;color:#fff;letter-spacing:-0.350px;transform:scaleX(0.9607);transform-origin:0 0;-webkit-text-stroke:0.30px #fff;">Start new deal</span>
<span class="t" style="left:1778.30px;top:810.23px;font-size:16.43px;font-weight:700;color:#1f70b0;letter-spacing:-0.350px;transform:scaleX(0.9389);transform-origin:0 0;-webkit-text-stroke:0.30px #1f70b0;">See info</span>
</div></div>
<div class="b" style="left:132px;top:867px;width:1764px;height:130px;border:1px solid #dcdcdc;border-radius:6px;box-sizing:border-box;overflow:hidden;background:#fff">
</div>
<div class="b" style="left:133px;top:868px;width:1762px;height:128px;overflow:hidden"><div class="b" style="left:-133px;top:-868px;width:1920px;height:1072px">
<div class="b" style="left:271px;top:867px;width:1px;height:130px;background:#dcdcdc"></div>
<svg class="b" style="left:151.816px;top:910.6320000000001px" width="100.416" height="41.84" viewBox="48 4 96 40">
<g fill="none" stroke="#dcdcdc" stroke-width="3.4">
<path d="M65.8 12.6 C64.6 9.8 62.3 8.6 59.6 8.6 C56 8.6 53.9 10.8 53.9 13.6 C53.9 16.9 56.8 18.3 59.9 19.4 C63.6 20.7 66.2 22.3 66.2 25.6 C66.2 29 63.4 31 59.6 31 C56.2 31 53.8 29.2 52.8 26.2"/>
<circle cx="96.8" cy="23.4" r="6.3"/>
<circle cx="113.8" cy="23.4" r="6.3"/>
<circle cx="131" cy="23.4" r="6.3"/>
</g>
<path d="M123 17 h4 v22.8 h-4z" fill="#dcdcdc"/>
<path d="M64.6 14.4 L68.6 14.4 L73.6 27 L77.2 14 L78.2 14 L82 27 L87.2 14.4 L93.8 8.2 L90.4 15.6 L83.6 31.6 L81.2 31.6 L77.6 19.6 L74.2 31.6 L71.8 31.6 Z" fill="#dcdcdc"/>
</svg>
<span class="t" style="left:296.80px;top:902.69px;font-size:18.57px;font-weight:700;color:#111;letter-spacing:-0.350px;transform:scaleX(0.9458);transform-origin:0 0;-webkit-text-stroke:0.30px #111;">Name of the Loan</span>
<span class="t" style="left:296.80px;top:931.36px;font-size:16.07px;font-weight:400;color:#555;letter-spacing:-0.227px;-webkit-text-stroke:0.22px #555;">Name of the Lender</span>
<div class="b" style="left:296px;top:949px;width:79px;height:24px;background:#e3eef9"></div>
<div class="b" style="left:296px;top:949px;width:2px;height:24px;background:#1a6aa8"></div>
<span class="t" style="left:305.00px;top:961.17px;font-size:14.29px;font-weight:700;color:#1f75b3;letter-spacing:-0.350px;transform:scaleX(0.9532);transform-origin:0 0;-webkit-text-stroke:0.20px #1f75b3;">Term loan</span>
<span class="t" style="left:681.00px;top:914.23px;font-size:16.43px;font-weight:400;color:#555;letter-spacing:-0.154px;-webkit-text-stroke:0.22px #555;">Offers between</span>
<span class="t" style="left:682.00px;top:946.42px;font-size:24.86px;font-weight:700;color:#111;letter-spacing:0.290px;-webkit-text-stroke:0.45px #111;">N$20 - N$75k</span>
<span class="t" style="left:1082.40px;top:916.68px;font-size:16.00px;font-weight:400;color:#555;letter-spacing:-0.161px;-webkit-text-stroke:0.22px #555;">Decision time</span>
<span class="t" style="left:1082.40px;top:945.50px;font-size:20.00px;font-weight:400;color:#000;letter-spacing:-0.350px;transform:scaleX(0.9970);transform-origin:0 0;-webkit-text-stroke:0.22px #000;-webkit-text-stroke:0.8px #000;">2 days</span>
<span class="t" style="left:1419.20px;top:916.68px;font-size:16.00px;font-weight:400;color:#555;letter-spacing:-0.204px;-webkit-text-stroke:0.22px #555;">Rates from</span>
<span class="t" style="left:1419.20px;top:945.50px;font-size:20.00px;font-weight:400;color:#000;letter-spacing:0.140px;-webkit-text-stroke:0.22px #000;-webkit-text-stroke:0.8px #000;">3.3%</span>
<div class="b" style="left:1742px;top:898px;width:130px;height:32px;background:#033e50;border-radius:16px"></div>
<span class="t" style="left:1754.80px;top:914.73px;font-size:16.71px;font-weight:700;color:#fff;letter-spacing:-0.350px;transform:scaleX(0.9607);transform-origin:0 0;-webkit-text-stroke:0.30px #fff;">Start new deal</span>
<span class="t" style="left:1778.30px;top:956.23px;font-size:16.43px;font-weight:700;color:#1f70b0;letter-spacing:-0.350px;transform:scaleX(0.9389);transform-origin:0 0;-webkit-text-stroke:0.30px #1f70b0;">See info</span>
</div></div>
<div class="b" style="left:132px;top:1013px;width:1764px;height:57px;border:1px solid #dcdcdc;border-radius:6px;box-sizing:border-box;overflow:hidden;background:#fff">
</div>
<div class="b" style="left:133px;top:1014px;width:1762px;height:55px;overflow:hidden"><div class="b" style="left:-133px;top:-1014px;width:1920px;height:1072px">
<div class="b" style="left:271px;top:1013px;width:1px;height:130px;background:#dcdcdc"></div>
<svg class="b" style="left:151.816px;top:1056.632px" width="100.416" height="41.84" viewBox="48 4 96 40">
<g fill="none" stroke="#dcdcdc" stroke-width="3.4">
<path d="M65.8 12.6 C64.6 9.8 62.3 8.6 59.6 8.6 C56 8.6 53.9 10.8 53.9 13.6 C53.9 16.9 56.8 18.3 59.9 19.4 C63.6 20.7 66.2 22.3 66.2 25.6 C66.2 29 63.4 31 59.6 31 C56.2 31 53.8 29.2 52.8 26.2"/>
<circle cx="96.8" cy="23.4" r="6.3"/>
<circle cx="113.8" cy="23.4" r="6.3"/>
<circle cx="131" cy="23.4" r="6.3"/>
</g>
<path d="M123 17 h4 v22.8 h-4z" fill="#dcdcdc"/>
<path d="M64.6 14.4 L68.6 14.4 L73.6 27 L77.2 14 L78.2 14 L82 27 L87.2 14.4 L93.8 8.2 L90.4 15.6 L83.6 31.6 L81.2 31.6 L77.6 19.6 L74.2 31.6 L71.8 31.6 Z" fill="#dcdcdc"/>
</svg>
<span class="t" style="left:296.80px;top:1048.69px;font-size:18.57px;font-weight:700;color:#111;letter-spacing:-0.350px;transform:scaleX(0.9458);transform-origin:0 0;-webkit-text-stroke:0.30px #111;">Name of the Loan</span>
<span class="t" style="left:296.80px;top:1077.36px;font-size:16.07px;font-weight:400;color:#555;letter-spacing:-0.227px;-webkit-text-stroke:0.22px #555;">Name of the Lender</span>
<div class="b" style="left:296px;top:1095px;width:79px;height:24px;background:#e3eef9"></div>
<div class="b" style="left:296px;top:1095px;width:2px;height:24px;background:#1a6aa8"></div>
<span class="t" style="left:305.00px;top:1107.17px;font-size:14.29px;font-weight:700;color:#1f75b3;letter-spacing:-0.350px;transform:scaleX(0.9532);transform-origin:0 0;-webkit-text-stroke:0.20px #1f75b3;">Term loan</span>
<span class="t" style="left:690.80px;top:1060.23px;font-size:16.43px;font-weight:400;color:#555;letter-spacing:-0.154px;-webkit-text-stroke:0.22px #555;">Offers between</span>
<span class="t" style="left:691.80px;top:1092.42px;font-size:24.86px;font-weight:700;color:#111;letter-spacing:0.290px;-webkit-text-stroke:0.45px #111;">N$20 - N$75k</span>
<span class="t" style="left:1062.30px;top:1062.68px;font-size:16.00px;font-weight:400;color:#555;letter-spacing:-0.161px;-webkit-text-stroke:0.22px #555;">Decision time</span>
<span class="t" style="left:1062.30px;top:1091.50px;font-size:20.00px;font-weight:400;color:#000;letter-spacing:-0.350px;transform:scaleX(0.9970);transform-origin:0 0;-webkit-text-stroke:0.22px #000;-webkit-text-stroke:0.8px #000;">2 days</span>
<span class="t" style="left:1408.70px;top:1062.68px;font-size:16.00px;font-weight:400;color:#555;letter-spacing:-0.204px;-webkit-text-stroke:0.22px #555;">Rates from</span>
<span class="t" style="left:1408.70px;top:1091.50px;font-size:20.00px;font-weight:400;color:#000;letter-spacing:0.140px;-webkit-text-stroke:0.22px #000;-webkit-text-stroke:0.8px #000;">3.3%</span>
<div class="b" style="left:1742px;top:1044px;width:130px;height:32px;background:#033e50;border-radius:16px"></div>
<span class="t" style="left:1754.80px;top:1060.73px;font-size:16.71px;font-weight:700;color:#fff;letter-spacing:-0.350px;transform:scaleX(0.9607);transform-origin:0 0;-webkit-text-stroke:0.30px #fff;">Start new deal</span>
<span class="t" style="left:1778.30px;top:1102.23px;font-size:16.43px;font-weight:700;color:#1f70b0;letter-spacing:-0.350px;transform:scaleX(0.9389);transform-origin:0 0;-webkit-text-stroke:0.30px #1f70b0;">See info</span>
</div></div>
</body></html>
